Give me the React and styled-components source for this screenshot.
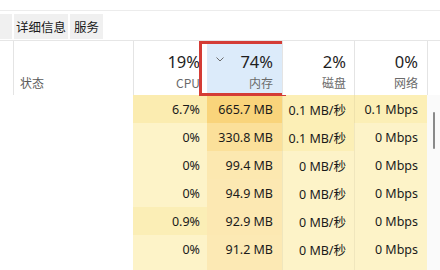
import React from "react";
import styled, { createGlobalStyle } from "styled-components";

const Global = createGlobalStyle`
  html, body { margin: 0; padding: 0; background: #fff; }
  body { width: 440px; height: 270px; overflow: hidden;
    font-family: "Noto Sans", "Noto Sans CJK SC", sans-serif; }
`;

const Page = styled.div`
  width: 440px;
  height: 270px;
  overflow: hidden;
  background: #fff;
  display: flex;
  flex-direction: column;
`;

const TopGap = styled.div`
  height: 10px;
  border-bottom: 1px solid #ececec;
  flex: none;
`;

const TabBar = styled.div`
  margin-top: 3px;
  height: 25px;
  display: flex;
  gap: 2px;
  flex: none;
  border-bottom: 1px solid #e6e6e6;
  padding-bottom: 1px;
`;

const Tab = styled.div`
  background: #f0f0f0;
  height: 25px;
  width: ${(p) => p.$w}px;
  display: flex;
  align-items: center;
  justify-content: center;
  overflow: hidden;
  font-family: "Noto Sans CJK SC", sans-serif;
  font-size: 12.5px;
  color: #1a1a1a;
  white-space: nowrap;
`;

const Grid = styled.div`
  display: grid;
  grid-template-columns: 13px 120px 74px 75px 72px 73px 13px;
  grid-auto-rows: 28px;
  grid-template-rows: 54px;
  flex: none;
`;

const HeadCell = styled.div`
  position: relative;
  height: 54px;
  background: ${(p) => (p.$active ? "#dcebfa" : "#fff")};
  border-left: ${(p) => (p.$sep ? "1px solid #e4e4e4" : "none")};
  display: flex;
  flex-direction: column;
  align-items: ${(p) => (p.$left ? "flex-start" : "flex-end")};
  justify-content: flex-end;
  padding: 0 ${(p) => p.$pr || 8}px 4px ${(p) => (p.$left ? 6 : 0)}px;
  box-sizing: border-box;
`;

const Pct = styled.div`
  font-size: 16.5px;
  color: #1e1e1e;
  line-height: 20px;
  margin-bottom: 3px;
`;

const Label = styled.div`
  font-family: "Noto Sans CJK SC", sans-serif;
  font-size: 12px;
  color: ${(p) => p.$c || "#6a6a6a"};
  line-height: 16px;
`;

const Chevron = styled.svg`
  position: absolute;
  left: 9px;
  top: 16px;
`;

const RedBox = styled.div`
  position: absolute;
  left: -8px;
  right: -4px;
  top: 0px;
  bottom: -1px;
  border: 3px solid #d43c36;
  pointer-events: none;
`;

const Cell = styled.div`
  background: ${(p) => p.$bg || "#fff"};
  border-left: ${(p) => (p.$sep ? "1px solid rgba(0,0,0,0.05)" : "none")};
  display: flex;
  align-items: center;
  justify-content: flex-end;
  padding-right: ${(p) => p.$pr || 8}px;
  box-sizing: border-box;
  font-size: 12.5px;
  color: #1a1a1a;
  white-space: nowrap;
  font-family: "Noto Sans", "Noto Sans CJK SC", sans-serif;
`;

const Gutter = styled.div`
  background: #fafafa;
  position: relative;
`;

const Thumb = styled.div`
  position: absolute;
  left: 6px;
  top: 17px;
  width: 2px;
  height: 37px;
  border-radius: 1px;
  background: #8a8a8a;
`;

const rows = [
  { cpu: "6.7%", mem: "665.7 MB", disk: "0.1 MB/秒", net: "0.1 Mbps", cbg: "#fbecb0", mbg: "#f9d47b", dbg: "#fcefb6", nbg: "#fcefb6" },
  { cpu: "0%", mem: "330.8 MB", disk: "0.1 MB/秒", net: "0 Mbps", cbg: "#fdf3c8", mbg: "#fbe09a", dbg: "#fcefb6", nbg: "#fdf3c8" },
  { cpu: "0%", mem: "99.4 MB", disk: "0 MB/秒", net: "0 Mbps", cbg: "#fdf3c8", mbg: "#fce8b0", dbg: "#fdf3c8", nbg: "#fdf3c8" },
  { cpu: "0%", mem: "94.9 MB", disk: "0 MB/秒", net: "0 Mbps", cbg: "#fdf3c8", mbg: "#fce8b2", dbg: "#fdf3c8", nbg: "#fdf3c8" },
  { cpu: "0.9%", mem: "92.9 MB", disk: "0 MB/秒", net: "0 Mbps", cbg: "#fbeeb6", mbg: "#fce8b2", dbg: "#fdf3c8", nbg: "#fdf3c8" },
  { cpu: "0%", mem: "91.2 MB", disk: "0 MB/秒", net: "0 Mbps", cbg: "#fdf3c8", mbg: "#fce9b4", dbg: "#fdf3c8", nbg: "#fdf3c8" },
  { cpu: "", mem: "", disk: "", net: "", cbg: "#fdf3c8", mbg: "#fce9b4", dbg: "#fdf3c8", nbg: "#fdf3c8" },
];

export default function App() {
  return (
    <Page>
      <Global />
      <TopGap />
      <TabBar>
        <Tab $w={12} />
        <Tab $w={54}>详细信息</Tab>
        <Tab $w={33}>服务</Tab>
      </TabBar>
      <Grid>
        <HeadCell />
        <HeadCell $sep $left>
          <Label $c="#5a5a5a">状态</Label>
        </HeadCell>
        <HeadCell $sep $pr={7}>
          <Pct>19%</Pct>
          <Label>CPU</Label>
        </HeadCell>
        <HeadCell $active $pr={9}>
          <Chevron width="8" height="5" viewBox="0 0 8 5">
            <path d="M0.5 0.5 L4 4 L7.5 0.5" fill="none" stroke="#6b6b6b" strokeWidth="1" />
          </Chevron>
          <Pct>74%</Pct>
          <Label>内存</Label>
          <RedBox />
        </HeadCell>
        <HeadCell $sep $pr={8}>
          <Pct>2%</Pct>
          <Label>磁盘</Label>
        </HeadCell>
        <HeadCell $sep $pr={9}>
          <Pct>0%</Pct>
          <Label>网络</Label>
        </HeadCell>
        <HeadCell $sep />

        {rows.map((r, i) => (
          <React.Fragment key={i}>
            <Cell />
            <Cell />
            <Cell $bg={r.cbg} $pr={7}>{r.cpu}</Cell>
            <Cell $bg={r.mbg} $pr={9}>{r.mem}</Cell>
            <Cell $bg={r.dbg} $pr={8} $sep>{r.disk}</Cell>
            <Cell $bg={r.nbg} $pr={9} $sep>{r.net}</Cell>
            {i === 0 ? (
              <Gutter style={{ gridRow: "span 7" }}>
                <Thumb />
              </Gutter>
            ) : null}
          </React.Fragment>
        ))}
      </Grid>
    </Page>
  );
}
